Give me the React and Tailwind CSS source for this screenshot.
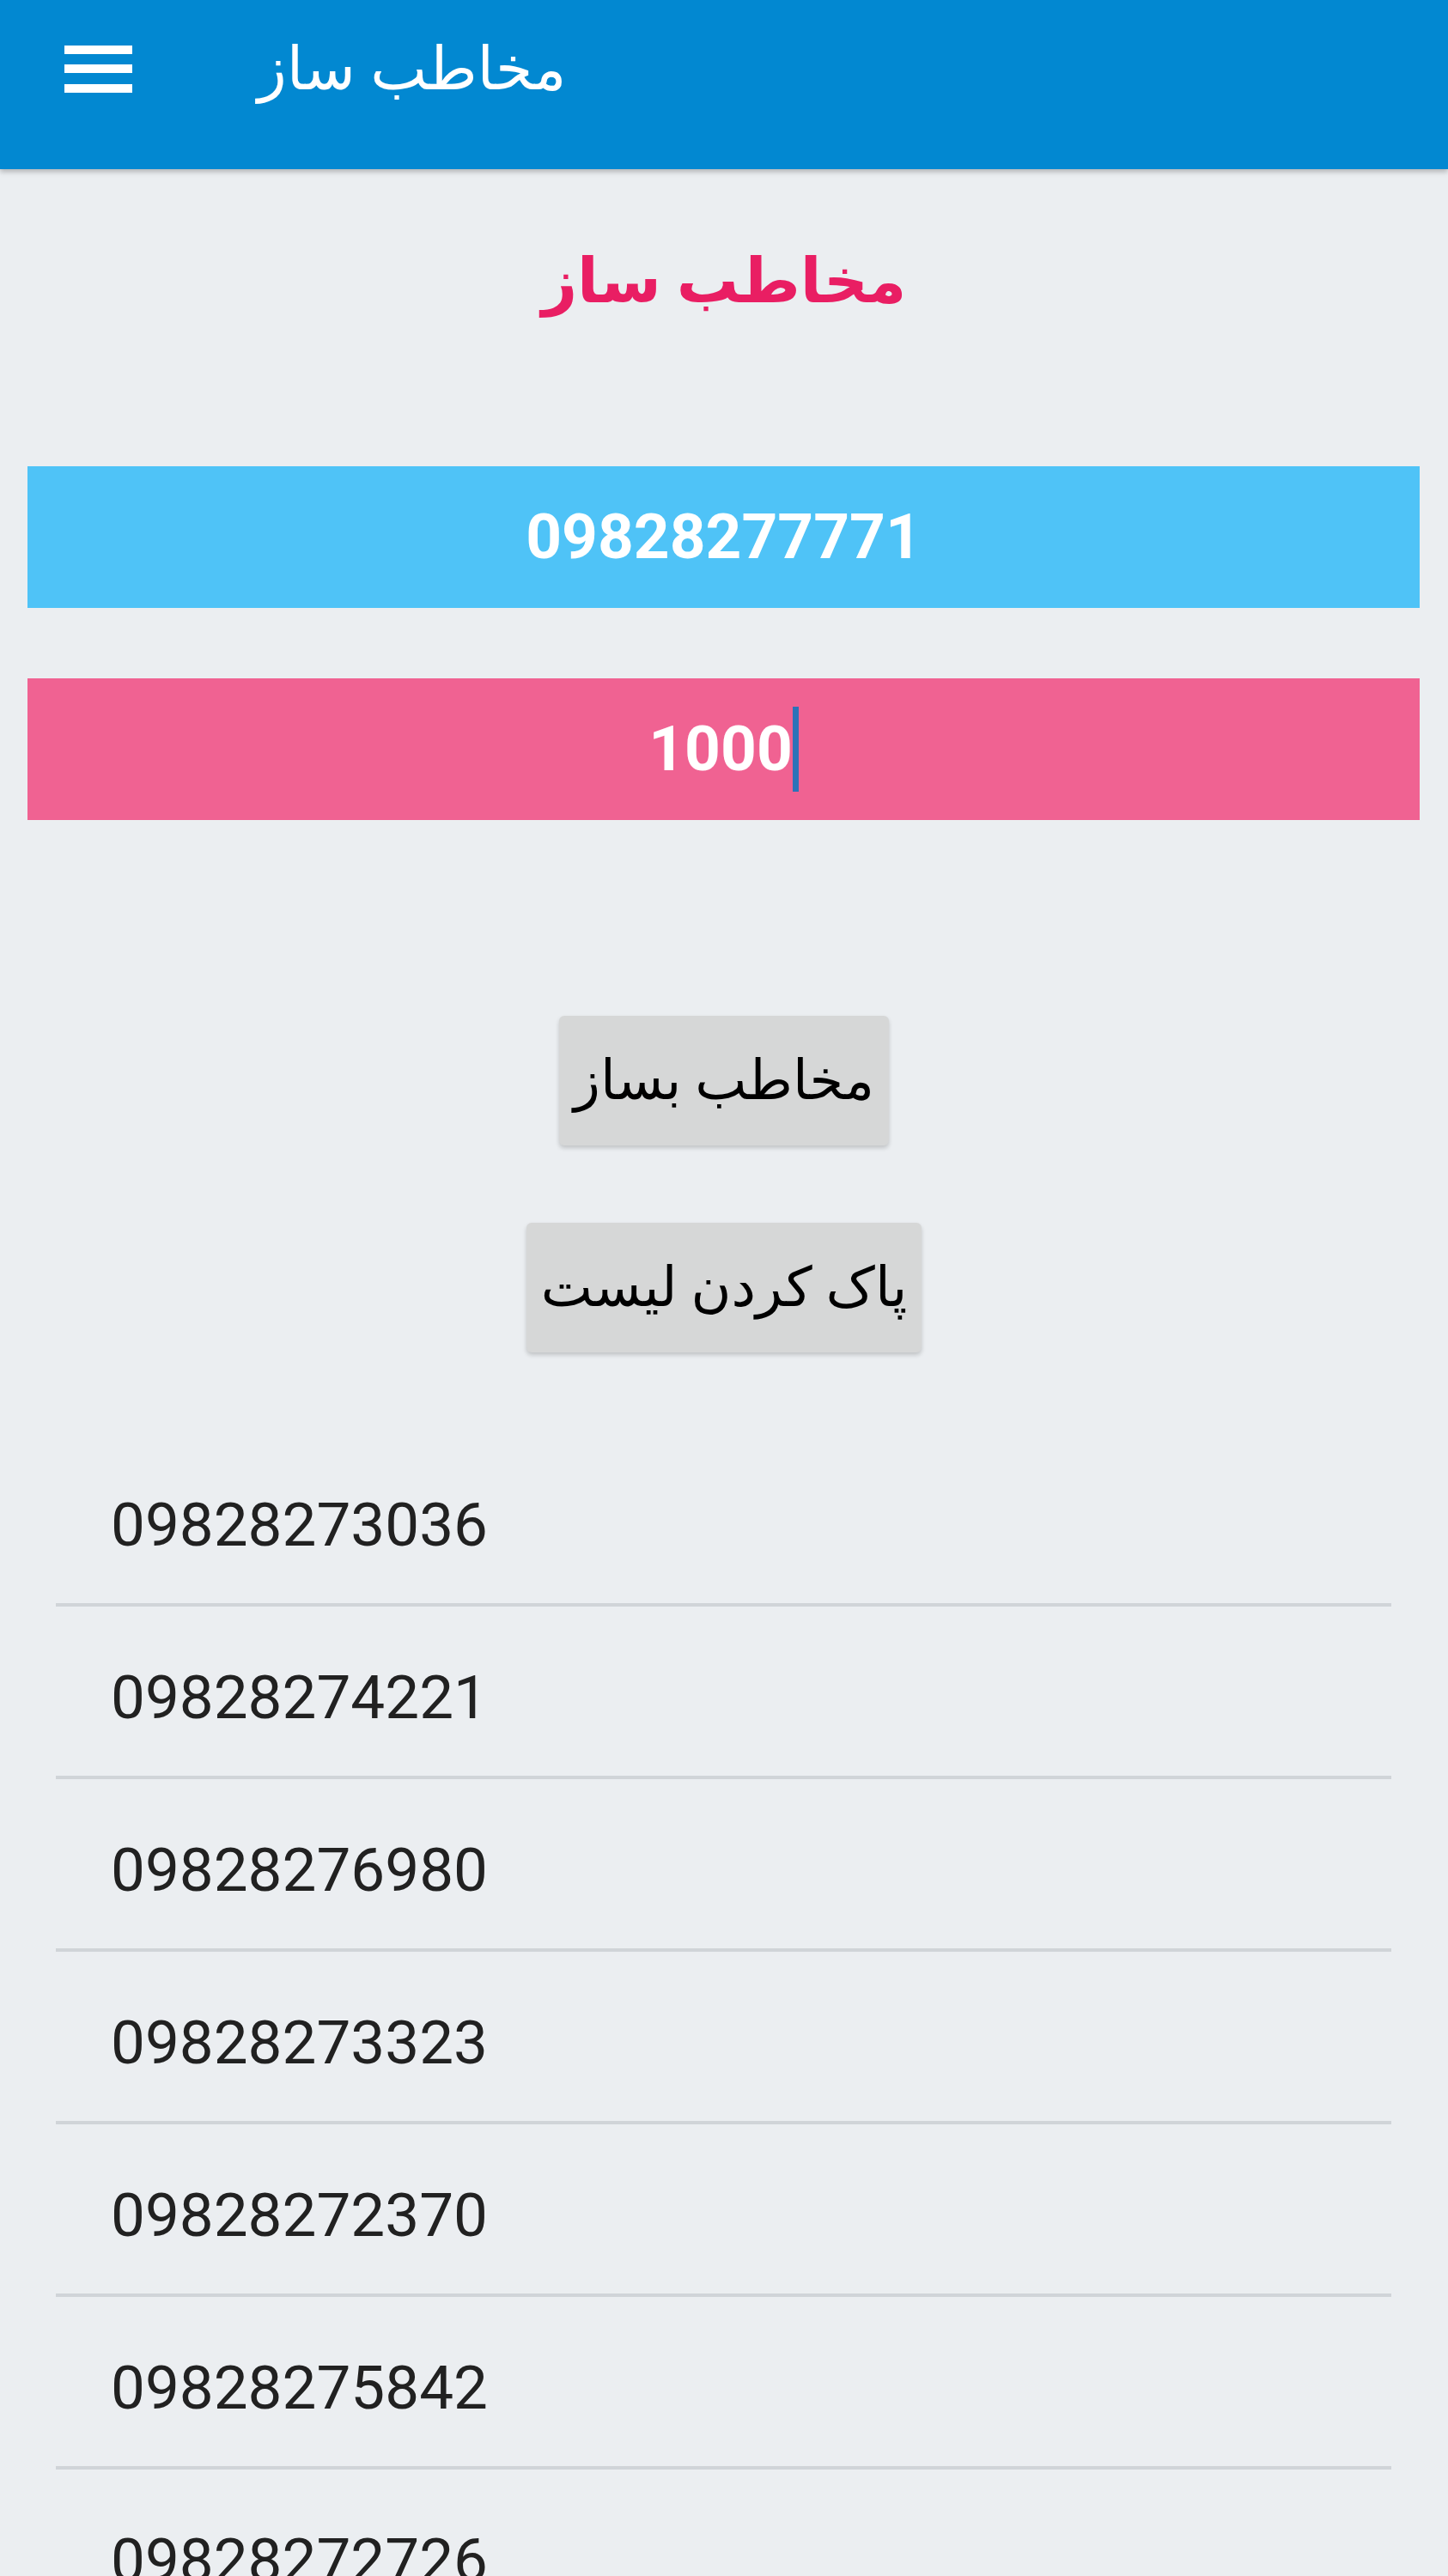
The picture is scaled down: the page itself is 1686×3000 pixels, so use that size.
import React from "react";

const numbers = [
    "09828273036",
    "09828274221",
    "09828276980",
    "09828273323",
    "09828272370",
    "09828275842",
    "09828272726",
];

function MenuIcon() {
    return (
        <svg width="79" height="55" viewBox="0 0 79 55" fill="#ffffff">
            <rect x="0" y="0" width="79" height="10" />
            <rect x="0" y="22" width="79" height="10" />
            <rect x="0" y="45" width="79" height="10" />
        </svg>
    );
}

export default function App() {
    return (
        <div className="min-h-[3000px] bg-[#ebeef1] font-['Roboto','DejaVu_Sans',sans-serif]">
            <header className="h-[197px] bg-[#0288d1] shadow-[0_3px_6px_rgba(0,0,0,0.25)] relative z-10">
                <div className="h-[160px] flex items-center pl-[75px]">
                    <MenuIcon />
                    <h1 className="ml-[146px] text-white text-[70px] leading-none">مخاطب ساز</h1>
                </div>
            </header>

            <div className="mt-[81px] h-[100px] flex items-center justify-center">
                <h2 className="text-[#e91e63] text-[72px] font-bold leading-none">مخاطب ساز</h2>
            </div>

            <div className="mt-[165px] mx-[32px] mr-[33px] h-[165px] bg-[#4fc3f7] flex items-center justify-center">
                <span className="text-white text-[73px] font-bold leading-none">09828277771</span>
            </div>

            <div className="mt-[82px] mx-[32px] mr-[33px] h-[165px] bg-[#f06292] flex items-center justify-center">
                <span className="text-white text-[73px] font-bold leading-none">1000</span>
                <span className="inline-block w-[7px] h-[99px] bg-[#2d72b8]"></span>
            </div>

            <div className="flex flex-col items-center">
                <button className="mt-[228px] w-[384px] h-[151px] rounded-[6px] bg-[#d6d7d7] text-black text-[64px] leading-none shadow-[0_3px_5px_rgba(0,0,0,0.18)]">
                    مخاطب بساز
                </button>
                <button className="mt-[90px] w-[460px] h-[151px] rounded-[6px] bg-[#d6d7d7] text-black text-[64px] leading-none shadow-[0_3px_5px_rgba(0,0,0,0.18)]">
                    پاک کردن لیست
                </button>
            </div>

            <ul className="mt-[95px] ml-[65px] mr-[66px]">
                {numbers.map((n) => (
                    <li key={n} className="h-[201px] border-b-[4px] border-[#d0d4d8] flex items-center pl-[64px] pt-[14px]">
                        <span className="text-[#212121] text-[71px] leading-none">{n}</span>
                    </li>
                ))}
            </ul>
        </div>
    );
}
